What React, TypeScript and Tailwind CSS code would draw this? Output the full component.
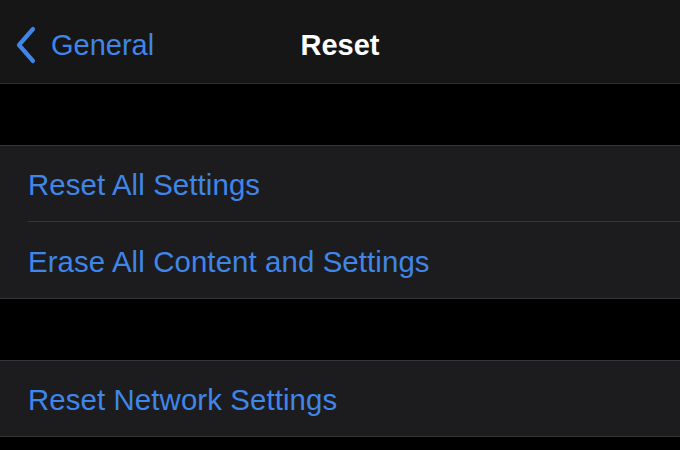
import React from 'react';

const rows1 = ['Reset All Settings', 'Erase All Content and Settings'];
const rows2 = ['Reset Network Settings'];

const Group: React.FC<{ items: string[]; last?: string }> = ({ items, last = 'h-[76px]' }) => (
  <div className="bg-[#1c1c1e] border-y border-[#363638]">
    {items.map((label, i) => (
      <div key={label} className="pl-[28px]">
        <div
          className={`flex items-center pt-[4px] text-[29.4px] text-[#3f86e8] tracking-[0.1px] ${
            i < items.length - 1 ? 'h-[76px] border-b border-[#363638]' : last
          }`}
        >
          {label}
        </div>
      </div>
    ))}
  </div>
);

export default function App() {
  return (
    <div className="w-[680px] h-[450px] bg-black overflow-hidden font-['Liberation_Sans',Arial,sans-serif]">
      <header className="h-[84px] bg-[#161616] border-b border-[#2e2e30] relative flex items-center justify-center pt-[8px]">
        <div className="absolute left-[14px] top-[26px] flex items-center gap-[13px]">
          <svg width="24" height="38" viewBox="0 0 24 38" fill="none">
            <path d="M19 3 L5 19 L19 35" stroke="#3f86e8" strokeWidth="4.2" strokeLinecap="round" strokeLinejoin="round" />
          </svg>
          <span className="text-[29px] text-[#3f86e8] leading-none">General</span>
        </div>
        <h1 className="text-[29px] font-bold text-white leading-none">Reset</h1>
      </header>

      <div className="h-[61px]" />
      <Group items={rows1} />
      <div className="h-[61px]" />
      <Group items={rows2} last="h-[75px]" />
    </div>
  );
}
